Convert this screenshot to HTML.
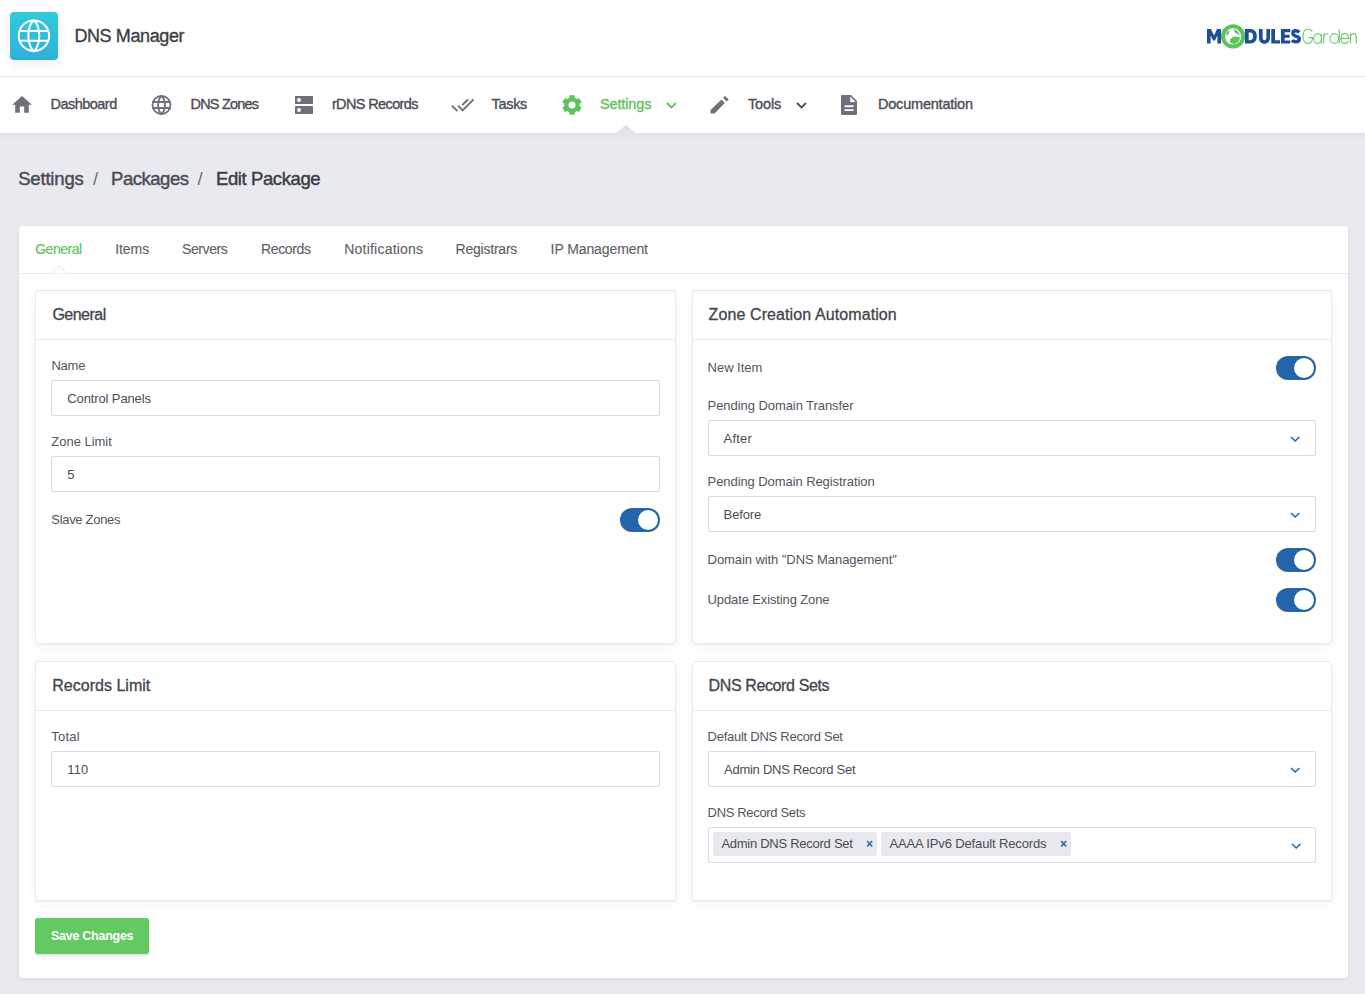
<!DOCTYPE html>
<html><head><meta charset="utf-8"><title>DNS Manager</title>
<style>
html,body{margin:0;padding:0;}
body{width:1365px;height:994px;position:relative;overflow:hidden;background:#e9eaef;font-family:"Liberation Sans",sans-serif;}
.t{position:absolute;white-space:nowrap;}
</style></head><body>
<div style="position:absolute;left:0px;top:0px;width:1365px;height:76px;background:#fff"></div>
<div style="position:absolute;left:0px;top:76px;width:1365px;height:1px;background:#ebebed"></div>
<div style="position:absolute;left:0px;top:77px;width:1365px;height:56px;background:#fff"></div>
<div style="position:absolute;left:0px;top:133px;width:1365px;height:6px;background:linear-gradient(#dfe0e5,#e9eaef)"></div>
<div style="position:absolute;left:10px;top:12px;width:48px;height:48px;border-radius:4px;background:linear-gradient(#30cbdc,#2fb0d8);box-shadow:0 3px 12px rgba(0,0,0,0.09)"></div>
<svg style="position:absolute;left:10px;top:12px" width="48" height="48" viewBox="0 0 48 48" fill="none" stroke="#fff" stroke-width="2">
<circle cx="23.9" cy="23.8" r="15.2"/>
<path d="M23.8 8.3 C16.5 15 16.5 32.6 23.8 39.3 C31.1 32.6 31.1 15 23.8 8.3"/>
<path d="M8.8 19 H38.8 M8.8 28.8 H38.8"/>
</svg>
<div class="t" style="left:74.40px;top:26.96px;font-size:18px;line-height:18px;letter-spacing:-0.383px;color:#3c3f45;font-weight:400;-webkit-text-stroke:0.35px #3c3f45;">DNS Manager</div>
<svg style="position:absolute;left:1200px;top:18px" width="165" height="40" viewBox="0 0 165 40">
<g fill="#1b4e9b">
<path d="M7 25.5 V11.1 H11 L14 17.4 L17 11.1 H21 V25.5 H17.4 V17.6 L14.9 22.6 H13.1 L10.6 17.6 V25.5 Z"/>
<path fill-rule="evenodd" d="M45 11.1 H50.3 C54.6 11.1 56.8 14 56.8 18.3 C56.8 22.6 54.6 25.5 50.3 25.5 H45 Z M48.7 14.4 V22.2 H50.1 C52.2 22.2 53.1 20.6 53.1 18.3 C53.1 16 52.2 14.4 50.1 14.4 Z"/>
<path d="M58.9 11.1 H62.6 V19.6 C62.6 21.4 63.4 22.3 64.5 22.3 C65.6 22.3 66.4 21.4 66.4 19.6 V11.1 H70 V19.8 C70 23.6 67.8 25.8 64.5 25.8 C61.2 25.8 58.9 23.6 58.9 19.8 Z"/>
<path d="M71.3 11.1 H75 V22.2 H80 V25.5 H71.3 Z"/>
<path d="M81 11.1 H90.3 V14.2 H84.7 V16.8 H89.6 V19.8 H84.7 V22.4 H90.3 V25.5 H81 Z"/>
</g>
<path d="M99.3 14.4 C98.3 13.3 96.9 12.8 95.6 12.8 C93.8 12.8 92.9 13.9 92.9 15.3 C92.9 17.3 94.7 17.9 96.4 18.4 C98.3 18.9 99.3 19.7 99.3 21.1 C99.3 22.9 97.8 23.9 95.9 23.9 C94.3 23.9 92.9 23.3 92 22.2" fill="none" stroke="#1b4e9b" stroke-width="3.4"/>
<circle cx="33.1" cy="18.4" r="10.1" fill="none" stroke="#5cc35a" stroke-width="4"/>
<g fill="#5cc35a">
<path d="M26.6 14.2 L28.6 12.8 L29.3 13.6 L28.6 15.8 L27 17.4 L26.3 16.2 Z"/>
<path d="M33.6 11.3 L35.6 11.8 L37.6 13.4 L38.9 15.4 L39.8 17 L38.2 16.8 L36.9 15.7 L35.8 15.2 L34.6 13.9 Z"/>
<path d="M29.8 22.2 L30.6 20.6 L32 19.9 L32.6 18.6 L34 18.9 L35.3 18.2 L36.4 19 L38 18.6 L39.8 19.2 L39.6 21.4 L38.6 23.4 L36.7 25 L34.6 25.9 L32.2 25.6 L30.4 24.8 Z"/>
</g>
<g fill="none" stroke="#6ccb69" stroke-width="1.15">
<path d="M112.3 13.6 C111.3 11.9 109.6 11.2 107.9 11.2 C104.6 11.2 102.9 14.4 102.9 18.3 C102.9 22.3 104.8 25.4 107.9 25.4 C110.9 25.4 112.5 22.9 112.5 19.6 H108.6"/>
<ellipse cx="117.6" cy="20.5" rx="3.9" ry="4.9"/>
<path d="M121.4 15.6 V25.5"/>
<path d="M123.7 15.6 V25.5 M123.7 19.5 C124.2 16.7 126.2 15.6 128.6 15.8"/>
<ellipse cx="134.3" cy="20.5" rx="4.3" ry="4.9"/>
<path d="M139.2 11.3 V25.5"/>
<path d="M141.2 20.3 H148.6 C148.5 17.5 146.9 15.6 144.8 15.6 C142.4 15.6 140.9 17.8 140.9 20.5 C140.9 23.4 142.5 25.4 144.9 25.4 C146.4 25.4 147.6 24.7 148.4 23.4"/>
<path d="M150.4 15.6 V25.5 M150.4 19.4 C150.7 16.9 152 15.6 153.5 15.6 C155.4 15.6 156.3 17 156.3 19.4 V25.5"/>
</g>
</svg>
<svg style="position:absolute;left:12px;top:95px" width="21" height="19" viewBox="0 0 21 19"><path d="M10.1 1 L19.8 9.8 H16.8 V17.8 H12.2 V11.6 H7.8 V17.8 H3.2 V9.8 H0.2 Z" fill="#6e7179"/></svg>
<svg style="position:absolute;left:151px;top:95px" width="21" height="21" viewBox="0 0 21 21" fill="none" stroke="#6e7179" stroke-width="1.8"><circle cx="10.5" cy="10" r="9"/><path d="M10.5 1 C6 5 6 15 10.5 19 C15 15 15 5 10.5 1 M1.5 7 H19.5 M1.5 13 H19.5"/></svg>
<svg style="position:absolute;left:294px;top:96px" width="20" height="18" viewBox="0 0 20 18"><rect x="1" y="0" width="18" height="8" rx="0.3" fill="#6e7179"/><rect x="1" y="10" width="18" height="8" rx="0.3" fill="#6e7179"/><circle cx="5" cy="4" r="2" fill="#fff"/><circle cx="5" cy="14" r="2" fill="#fff"/></svg>
<svg style="position:absolute;left:445px;top:90px" width="35" height="30" viewBox="0 0 35 30" fill="none" stroke="#6e7179" stroke-width="1.9"><path d="M6.9 15.7 L12.5 21.1 M13.1 15.7 L17.6 20.4 L28.6 9.4 M17.2 15.2 L22.9 9.5"/></svg>
<svg style="position:absolute;left:562px;top:95px" width="20" height="20" viewBox="0 0 20 20"><path fill-rule="evenodd" fill="#5ec35d" d="M7.40 2.75 L7.40 0.34 L12.60 0.34 L12.60 2.75 L13.24 3.01 L13.85 3.33 L14.43 3.70 L14.98 4.12 L17.06 2.92 L19.66 7.42 L17.58 8.63 L17.67 9.31 L17.70 10.00 L17.67 10.69 L17.58 11.37 L19.66 12.58 L17.06 17.08 L14.98 15.88 L14.43 16.30 L13.85 16.67 L13.24 16.99 L12.60 17.25 L12.60 19.66 L7.40 19.66 L7.40 17.25 L6.76 16.99 L6.15 16.67 L5.57 16.30 L5.02 15.88 L2.94 17.08 L0.34 12.58 L2.42 11.37 L2.33 10.69 L2.30 10.00 L2.33 9.31 L2.42 8.63 L0.34 7.42 L2.94 2.92 L5.02 4.12 L5.57 3.70 L6.15 3.33 L6.76 3.01 Z M13.5 10 A3.5 3.5 0 1 0 6.5 10 A3.5 3.5 0 1 0 13.5 10 Z"/></svg>
<svg style="position:absolute;left:666px;top:102px" width="11" height="7" viewBox="0 0 11 7" fill="none" stroke="#5ec35d" stroke-width="1.8"><path d="M1 1 L5.5 5.5 L10 1"/></svg>
<svg style="position:absolute;left:710px;top:95px" width="20" height="20" viewBox="0 0 20 20"><path d="M0.5 14.9 L11.5 4.4 L14.8 8 L4.6 18.6 L0.5 18.6 Z M13 2.55 L15.1 0.9 L18.8 4.4 L16.5 6.6 Z" fill="#6e7179"/></svg>
<svg style="position:absolute;left:796px;top:102px" width="11" height="7" viewBox="0 0 11 7" fill="none" stroke="#4a4d55" stroke-width="1.8"><path d="M1 1 L5.5 5.5 L10 1"/></svg>
<svg style="position:absolute;left:841px;top:95px" width="16" height="20" viewBox="0 0 16 20"><path d="M1 0 H10 L16 6 V19 Q16 20 15 20 H1 Q0 20 0 19 V1 Q0 0 1 0 Z" fill="#6e7179"/><path d="M9.2 1.6 V6.9 H14.6 Z" fill="#fff"/><rect x="3.6" y="10.3" width="9" height="1.8" fill="#fff"/><rect x="3.6" y="14.2" width="9" height="1.8" fill="#fff"/></svg>
<svg style="position:absolute;left:614px;top:124px" width="24" height="10" viewBox="0 0 24 10"><defs><linearGradient id="ng" x1="0" y1="0" x2="0" y2="1"><stop offset="0" stop-color="#dcdde2"/><stop offset="1" stop-color="#e6e7ec"/></linearGradient></defs><path d="M1.5 9.5 L12 1 L22.5 9.5 Z" fill="url(#ng)"/></svg>
<div class="t" style="left:50.50px;top:96.93px;font-size:14.5px;line-height:14.5px;letter-spacing:-0.526px;color:#4a4d55;font-weight:400;-webkit-text-stroke:0.35px #4a4d55;">Dashboard</div>
<div class="t" style="left:190.50px;top:96.93px;font-size:14.5px;line-height:14.5px;letter-spacing:-0.796px;color:#4a4d55;font-weight:400;-webkit-text-stroke:0.35px #4a4d55;">DNS Zones</div>
<div class="t" style="left:331.90px;top:96.93px;font-size:14.5px;line-height:14.5px;letter-spacing:-0.623px;color:#4a4d55;font-weight:400;-webkit-text-stroke:0.35px #4a4d55;">rDNS Records</div>
<div class="t" style="left:491.60px;top:96.93px;font-size:14.5px;line-height:14.5px;letter-spacing:-0.337px;color:#4a4d55;font-weight:400;-webkit-text-stroke:0.35px #4a4d55;">Tasks</div>
<div class="t" style="left:600.00px;top:96.93px;font-size:14.5px;line-height:14.5px;letter-spacing:-0.145px;color:#5ec35d;font-weight:400;-webkit-text-stroke:0.35px #5ec35d;">Settings</div>
<div class="t" style="left:747.90px;top:96.93px;font-size:14.5px;line-height:14.5px;letter-spacing:-0.114px;color:#4a4d55;font-weight:400;-webkit-text-stroke:0.35px #4a4d55;">Tools</div>
<div class="t" style="left:878.00px;top:96.93px;font-size:14.5px;line-height:14.5px;letter-spacing:-0.209px;color:#4a4d55;font-weight:400;-webkit-text-stroke:0.35px #4a4d55;">Documentation</div>
<div class="t" style="left:18.20px;top:170.34px;font-size:18.5px;line-height:18.5px;letter-spacing:-0.183px;color:#4a4d55;font-weight:400;-webkit-text-stroke:0.45px #4a4d55;">Settings</div>
<div class="t" style="left:93.00px;top:170.34px;font-size:18.5px;line-height:18.5px;letter-spacing:0.000px;color:#6b6e76;font-weight:400;">/</div>
<div class="t" style="left:111.00px;top:170.34px;font-size:18.5px;line-height:18.5px;letter-spacing:-0.459px;color:#4a4d55;font-weight:400;-webkit-text-stroke:0.45px #4a4d55;">Packages</div>
<div class="t" style="left:197.50px;top:170.34px;font-size:18.5px;line-height:18.5px;letter-spacing:0.000px;color:#6b6e76;font-weight:400;">/</div>
<div class="t" style="left:216.00px;top:170.34px;font-size:18.5px;line-height:18.5px;letter-spacing:-0.405px;color:#3b3e45;font-weight:400;-webkit-text-stroke:0.45px #3b3e45;">Edit Package</div>
<div style="position:absolute;left:19px;top:226px;width:1329px;height:752px;background:#fff;border-radius:4px;box-shadow:0 1px 5px rgba(20,30,60,0.07)"></div>
<div style="position:absolute;left:19px;top:273px;width:1329px;height:1px;background:#e7e9ef"></div>
<svg style="position:absolute;left:51px;top:265px" width="16" height="10" viewBox="0 0 16 10"><path d="M0 8.5 L8 1.2 L16 8.5" fill="#fff" stroke="#e7e9ef" stroke-width="1"/></svg>
<div style="position:absolute;left:49px;top:273.5px;width:20px;height:2px;background:transparent"></div>
<div class="t" style="left:35.20px;top:242.15px;font-size:14px;line-height:14px;letter-spacing:-0.490px;color:#5ec35d;font-weight:400;-webkit-text-stroke:0.15px #5ec35d;">General</div>
<div class="t" style="left:115.20px;top:242.15px;font-size:14px;line-height:14px;letter-spacing:-0.058px;color:#5f6269;font-weight:400;-webkit-text-stroke:0.15px #5f6269;">Items</div>
<div class="t" style="left:182.00px;top:242.15px;font-size:14px;line-height:14px;letter-spacing:-0.405px;color:#5f6269;font-weight:400;-webkit-text-stroke:0.15px #5f6269;">Servers</div>
<div class="t" style="left:261.00px;top:242.15px;font-size:14px;line-height:14px;letter-spacing:-0.358px;color:#5f6269;font-weight:400;-webkit-text-stroke:0.15px #5f6269;">Records</div>
<div class="t" style="left:344.30px;top:242.15px;font-size:14px;line-height:14px;letter-spacing:0.206px;color:#5f6269;font-weight:400;-webkit-text-stroke:0.15px #5f6269;">Notifications</div>
<div class="t" style="left:455.60px;top:242.15px;font-size:14px;line-height:14px;letter-spacing:-0.230px;color:#5f6269;font-weight:400;-webkit-text-stroke:0.15px #5f6269;">Registrars</div>
<div class="t" style="left:550.60px;top:242.15px;font-size:14px;line-height:14px;letter-spacing:-0.097px;color:#5f6269;font-weight:400;-webkit-text-stroke:0.15px #5f6269;">IP Management</div>
<div style="position:absolute;left:35px;top:290px;width:641px;height:354px;background:#fff;border:1px solid #e8e9ee;box-sizing:border-box;border-radius:3px;box-shadow:0 1px 2px rgba(30,40,70,0.06),0 4px 14px rgba(30,40,70,0.045)"></div>
<div style="position:absolute;left:35px;top:339px;width:641px;height:1px;background:#e8e9ee"></div>
<div style="position:absolute;left:692px;top:290px;width:640px;height:354px;background:#fff;border:1px solid #e8e9ee;box-sizing:border-box;border-radius:3px;box-shadow:0 1px 2px rgba(30,40,70,0.06),0 4px 14px rgba(30,40,70,0.045)"></div>
<div style="position:absolute;left:692px;top:339px;width:640px;height:1px;background:#e8e9ee"></div>
<div style="position:absolute;left:35px;top:661px;width:641px;height:240px;background:#fff;border:1px solid #e8e9ee;box-sizing:border-box;border-radius:3px;box-shadow:0 1px 2px rgba(30,40,70,0.06),0 4px 14px rgba(30,40,70,0.045)"></div>
<div style="position:absolute;left:35px;top:710px;width:641px;height:1px;background:#e8e9ee"></div>
<div style="position:absolute;left:692px;top:661px;width:640px;height:240px;background:#fff;border:1px solid #e8e9ee;box-sizing:border-box;border-radius:3px;box-shadow:0 1px 2px rgba(30,40,70,0.06),0 4px 14px rgba(30,40,70,0.045)"></div>
<div style="position:absolute;left:692px;top:710px;width:640px;height:1px;background:#e8e9ee"></div>
<div class="t" style="left:52.40px;top:306.76px;font-size:16px;line-height:16px;letter-spacing:-0.510px;color:#42454c;font-weight:400;-webkit-text-stroke:0.3px #42454c;">General</div>
<div class="t" style="left:708.60px;top:306.76px;font-size:16px;line-height:16px;letter-spacing:0.099px;color:#42454c;font-weight:400;-webkit-text-stroke:0.3px #42454c;">Zone Creation Automation</div>
<div class="t" style="left:52.30px;top:677.66px;font-size:16px;line-height:16px;letter-spacing:0.013px;color:#42454c;font-weight:400;-webkit-text-stroke:0.3px #42454c;">Records Limit</div>
<div class="t" style="left:708.60px;top:677.66px;font-size:16px;line-height:16px;letter-spacing:-0.381px;color:#42454c;font-weight:400;-webkit-text-stroke:0.3px #42454c;">DNS Record Sets</div>
<div class="t" style="left:51.50px;top:359.00px;font-size:13px;line-height:13px;letter-spacing:-0.270px;color:#52555c;font-weight:400;">Name</div>
<div style="position:absolute;left:51px;top:380px;width:609px;height:36px;background:#fff;border:1px solid #d9dce5;box-sizing:border-box;border-radius:2px"></div>
<div class="t" style="left:67.30px;top:392.00px;font-size:13px;line-height:13px;letter-spacing:-0.122px;color:#4a4d55;font-weight:400;">Control Panels</div>
<div class="t" style="left:51.30px;top:435.00px;font-size:13px;line-height:13px;letter-spacing:-0.023px;color:#52555c;font-weight:400;">Zone Limit</div>
<div style="position:absolute;left:51px;top:456px;width:609px;height:36px;background:#fff;border:1px solid #d9dce5;box-sizing:border-box;border-radius:2px"></div>
<div class="t" style="left:67.30px;top:468.00px;font-size:13px;line-height:13px;letter-spacing:0.000px;color:#4a4d55;font-weight:400;">5</div>
<div class="t" style="left:51.30px;top:512.50px;font-size:13px;line-height:13px;letter-spacing:-0.308px;color:#52555c;font-weight:400;">Slave Zones</div>
<div style="position:absolute;left:620px;top:508px;width:40px;height:24px;background:#2563aa;border-radius:12px"></div>
<div style="position:absolute;left:638px;top:510px;width:20px;height:20px;background:#fff;border-radius:10px"></div>
<div class="t" style="left:707.60px;top:360.50px;font-size:13px;line-height:13px;letter-spacing:-0.032px;color:#52555c;font-weight:400;">New Item</div>
<div style="position:absolute;left:1276px;top:356px;width:40px;height:24px;background:#2563aa;border-radius:12px"></div>
<div style="position:absolute;left:1294px;top:358px;width:20px;height:20px;background:#fff;border-radius:10px"></div>
<div class="t" style="left:707.60px;top:398.50px;font-size:13px;line-height:13px;letter-spacing:-0.065px;color:#52555c;font-weight:400;">Pending Domain Transfer</div>
<div style="position:absolute;left:708px;top:420px;width:608px;height:36px;background:#fff;border:1px solid #d9dce5;box-sizing:border-box;border-radius:2px"></div>
<div class="t" style="left:723.60px;top:432.00px;font-size:13px;line-height:13px;letter-spacing:0.192px;color:#4a4d55;font-weight:400;">After</div>
<svg style="position:absolute;left:1290px;top:436px" width="11" height="7" viewBox="0 0 11 7" fill="none" stroke="#2266b0" stroke-width="1.6"><path d="M1 1 L5.2 5 L9.4 1"/></svg>
<div class="t" style="left:707.60px;top:475.00px;font-size:13px;line-height:13px;letter-spacing:-0.078px;color:#52555c;font-weight:400;">Pending Domain Registration</div>
<div style="position:absolute;left:708px;top:496px;width:608px;height:36px;background:#fff;border:1px solid #d9dce5;box-sizing:border-box;border-radius:2px"></div>
<div class="t" style="left:723.60px;top:508.00px;font-size:13px;line-height:13px;letter-spacing:-0.117px;color:#4a4d55;font-weight:400;">Before</div>
<svg style="position:absolute;left:1290px;top:512px" width="11" height="7" viewBox="0 0 11 7" fill="none" stroke="#2266b0" stroke-width="1.6"><path d="M1 1 L5.2 5 L9.4 1"/></svg>
<div class="t" style="left:707.60px;top:553.00px;font-size:13px;line-height:13px;letter-spacing:-0.078px;color:#52555c;font-weight:400;">Domain with &quot;DNS Management&quot;</div>
<div style="position:absolute;left:1276px;top:548px;width:40px;height:24px;background:#2563aa;border-radius:12px"></div>
<div style="position:absolute;left:1294px;top:550px;width:20px;height:20px;background:#fff;border-radius:10px"></div>
<div class="t" style="left:707.60px;top:593.00px;font-size:13px;line-height:13px;letter-spacing:-0.125px;color:#52555c;font-weight:400;">Update Existing Zone</div>
<div style="position:absolute;left:1276px;top:588px;width:40px;height:24px;background:#2563aa;border-radius:12px"></div>
<div style="position:absolute;left:1294px;top:590px;width:20px;height:20px;background:#fff;border-radius:10px"></div>
<div class="t" style="left:51.30px;top:730.00px;font-size:13px;line-height:13px;letter-spacing:0.193px;color:#52555c;font-weight:400;">Total</div>
<div style="position:absolute;left:51px;top:751px;width:609px;height:36px;background:#fff;border:1px solid #d9dce5;box-sizing:border-box;border-radius:2px"></div>
<div class="t" style="left:67.30px;top:763.00px;font-size:13px;line-height:13px;letter-spacing:0.083px;color:#4a4d55;font-weight:400;">110</div>
<div class="t" style="left:707.60px;top:730.00px;font-size:13px;line-height:13px;letter-spacing:-0.263px;color:#52555c;font-weight:400;">Default DNS Record Set</div>
<div style="position:absolute;left:708px;top:751px;width:608px;height:36px;background:#fff;border:1px solid #d9dce5;box-sizing:border-box;border-radius:2px"></div>
<div class="t" style="left:724.00px;top:763.00px;font-size:13px;line-height:13px;letter-spacing:-0.261px;color:#4a4d55;font-weight:400;">Admin DNS Record Set</div>
<svg style="position:absolute;left:1290px;top:767px" width="11" height="7" viewBox="0 0 11 7" fill="none" stroke="#2266b0" stroke-width="1.6"><path d="M1 1 L5.2 5 L9.4 1"/></svg>
<div class="t" style="left:707.60px;top:806.00px;font-size:13px;line-height:13px;letter-spacing:-0.341px;color:#52555c;font-weight:400;">DNS Record Sets</div>
<div style="position:absolute;left:708px;top:827px;width:608px;height:36px;background:#fff;border:1px solid #d9dce5;box-sizing:border-box;border-radius:2px"></div>
<svg style="position:absolute;left:1290.5px;top:843px" width="11" height="7" viewBox="0 0 11 7" fill="none" stroke="#2266b0" stroke-width="1.6"><path d="M1 1 L5.2 5 L9.4 1"/></svg>
<div style="position:absolute;left:713px;top:832px;width:164px;height:24px;background:#e8e9ee;border-radius:3px"></div>
<div class="t" style="left:721.40px;top:837.00px;font-size:13px;line-height:13px;letter-spacing:-0.267px;color:#4a4d55;font-weight:400;">Admin DNS Record Set</div>
<div style="position:absolute;left:881px;top:832px;width:190px;height:24px;background:#e8e9ee;border-radius:3px"></div>
<div class="t" style="left:889.40px;top:837.00px;font-size:13px;line-height:13px;letter-spacing:-0.134px;color:#4a4d55;font-weight:400;">AAAA IPv6 Default Records</div>
<div class="t" style="left:866.00px;top:838.34px;font-size:12px;line-height:12px;letter-spacing:0.000px;color:#2563aa;font-weight:700;">×</div>
<div class="t" style="left:1060.00px;top:838.34px;font-size:12px;line-height:12px;letter-spacing:0.000px;color:#2563aa;font-weight:700;">×</div>
<div style="position:absolute;left:35px;top:918px;width:114px;height:36px;background:#63c963;border-radius:3px;box-shadow:0 2px 3px rgba(0,0,0,0.12)"></div>
<div class="t" style="left:51.00px;top:930.42px;font-size:12.5px;line-height:12.5px;letter-spacing:-0.267px;color:#fff;font-weight:700;">Save Changes</div>
</body></html>
